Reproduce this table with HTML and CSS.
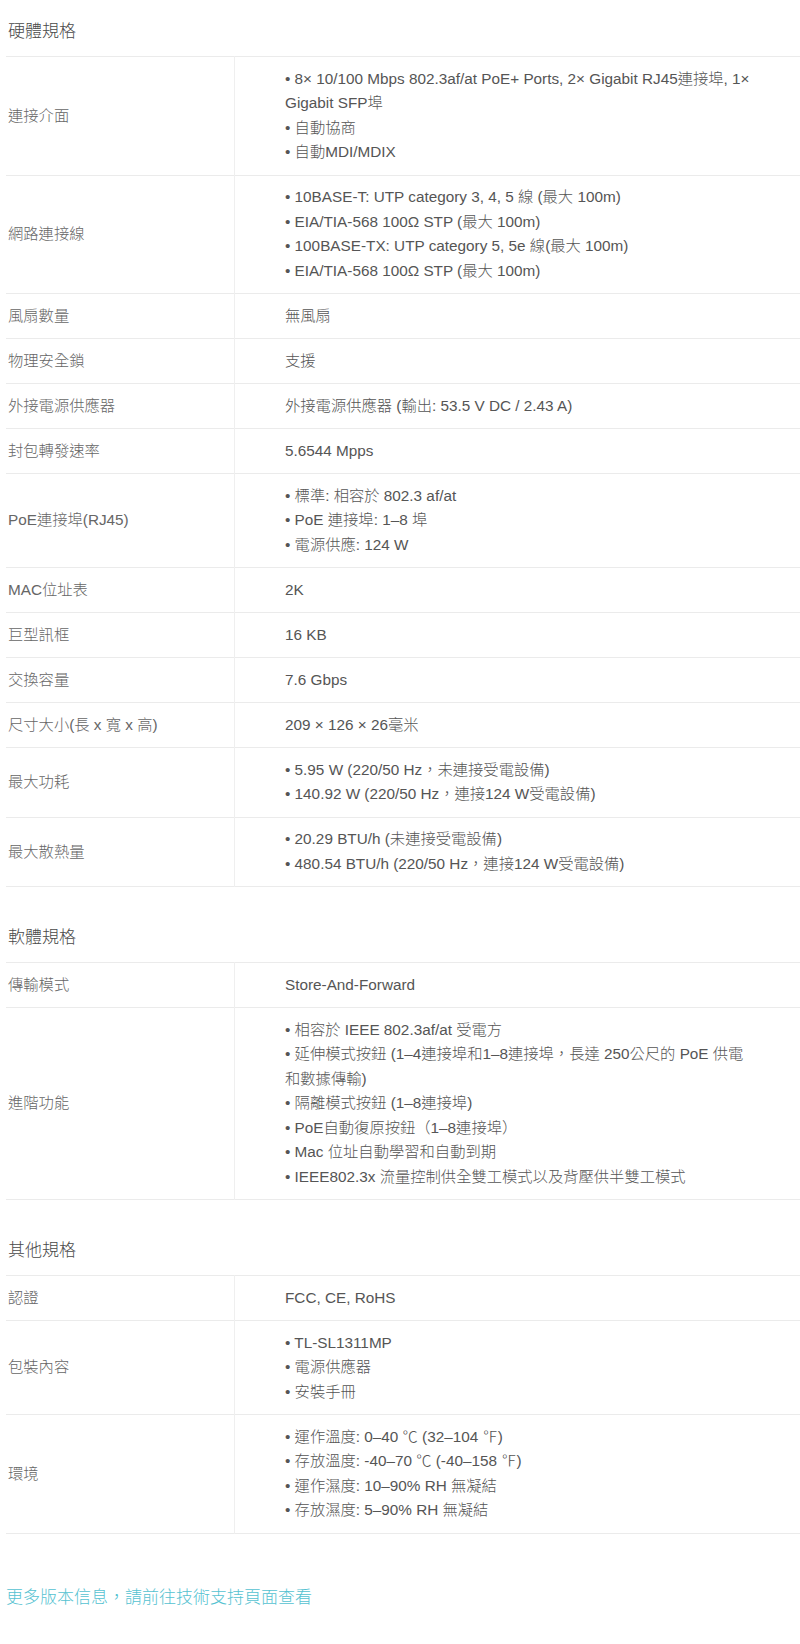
FILE: index.html
```html
<!DOCTYPE html>
<html lang="zh-Hant">
<head>
<meta charset="utf-8">
<title>規格</title>
<link rel="stylesheet" href="styles.css">
</head>
<body>
<div class="page">
  <section class="spec">
    <h3 class="spec-title">硬體規格</h3>
    <table class="spec-table">
      <tr><td class="label">連接介面</td><td class="value">• 8× 10/100 Mbps 802.3af/at PoE+ Ports, 2× Gigabit RJ45連接埠, 1× Gigabit SFP埠<br>• 自動協商<br>• 自動MDI/MDIX</td></tr>
      <tr><td class="label">網路連接線</td><td class="value">• 10BASE-T: UTP category 3, 4, 5 線 (最大 100m)<br>• EIA/TIA-568 100Ω STP (最大 100m)<br>• 100BASE-TX: UTP category 5, 5e 線(最大 100m)<br>• EIA/TIA-568 100Ω STP (最大 100m)</td></tr>
      <tr><td class="label">風扇數量</td><td class="value">無風扇</td></tr>
      <tr><td class="label">物理安全鎖</td><td class="value">支援</td></tr>
      <tr><td class="label">外接電源供應器</td><td class="value">外接電源供應器 (輸出: 53.5 V DC / 2.43 A)</td></tr>
      <tr><td class="label">封包轉發速率</td><td class="value">5.6544 Mpps</td></tr>
      <tr><td class="label">PoE連接埠(RJ45)</td><td class="value">• 標準: 相容於 802.3 af/at<br>• PoE 連接埠: 1–8 埠<br>• 電源供應: 124 W</td></tr>
      <tr><td class="label">MAC位址表</td><td class="value">2K</td></tr>
      <tr><td class="label">巨型訊框</td><td class="value">16 KB</td></tr>
      <tr><td class="label">交換容量</td><td class="value">7.6 Gbps</td></tr>
      <tr><td class="label">尺寸大小(長 x 寬 x 高)</td><td class="value">209 × 126 × 26毫米</td></tr>
      <tr><td class="label">最大功耗</td><td class="value">• 5.95 W (220/50 Hz，未連接受電設備)<br>• 140.92 W (220/50 Hz，連接124 W受電設備)</td></tr>
      <tr><td class="label">最大散熱量</td><td class="value">• 20.29 BTU/h (未連接受電設備)<br>• 480.54 BTU/h (220/50 Hz，連接124 W受電設備)</td></tr>
    </table>
  </section>

  <section class="spec">
    <h3 class="spec-title">軟體規格</h3>
    <table class="spec-table">
      <tr><td class="label">傳輸模式</td><td class="value">Store-And-Forward</td></tr>
      <tr><td class="label">進階功能</td><td class="value">• 相容於 IEEE 802.3af/at 受電方<br>• 延伸模式按鈕 (1–4連接埠和1–8連接埠，長達 250公尺的 PoE 供電和數據傳輸)<br>• 隔離模式按鈕 (1–8連接埠)<br>• PoE自動復原按鈕（1–8連接埠）<br>• Mac 位址自動學習和自動到期<br>• IEEE802.3x 流量控制供全雙工模式以及背壓供半雙工模式</td></tr>
    </table>
  </section>

  <section class="spec">
    <h3 class="spec-title">其他規格</h3>
    <table class="spec-table">
      <tr><td class="label">認證</td><td class="value">FCC, CE, RoHS</td></tr>
      <tr><td class="label">包裝內容</td><td class="value">• TL-SL1311MP<br>• 電源供應器<br>• 安裝手冊</td></tr>
      <tr><td class="label">環境</td><td class="value">• 運作溫度: 0–40 ℃ (32–104 ℉)<br>• 存放溫度: -40–70 ℃ (-40–158 ℉)<br>• 運作濕度: 10–90% RH 無凝結<br>• 存放濕度: 5–90% RH 無凝結</td></tr>
    </table>
  </section>

  <p class="more"><a class="more-link" href="#">更多版本信息，請前往技術支持頁面查看</a></p>
</div>
</body>
</html>
```

FILE: styles.css
```css
html, body {
  margin: 0;
  padding: 0;
  background: #fff;
}

body {
  font-family: "Liberation Sans", Arial, "Noto Sans CJK TC", sans-serif;
  font-weight: 300;
  color: #555;
  font-size: 15.3px;
  line-height: 24.5px;
}

.page {
  padding: 0 0 0 6px;
}

.spec + .spec {
  margin-top: 19px;
}

.spec-title {
  margin: 0;
  padding: 20px 0 12px 2px;
  font-size: 17px;
  line-height: 24px;
  font-weight: 300;
  color: #4a4a4a;
}

.spec-table {
  width: 794px;
  border-collapse: collapse;
  border-top: 1px solid #ebebeb;
  table-layout: fixed;
}

.spec-table tr {
  border-bottom: 1px solid #ebebeb;
}

.spec-table td {
  padding: 9.75px 0;
  vertical-align: middle;
}

.label {
  width: 226px;
  padding-left: 2px !important;
  border-right: 1px solid #efefef;
  color: #666;
}

.value {
  padding-left: 50px !important;
  padding-right: 44px !important;
  color: #555;
}

.more {
  margin: 52px 0 0 0;
  font-size: 17px;
  line-height: 24px;
}

.more-link {
  color: #55c2d1;
  text-decoration: none;
}
```
